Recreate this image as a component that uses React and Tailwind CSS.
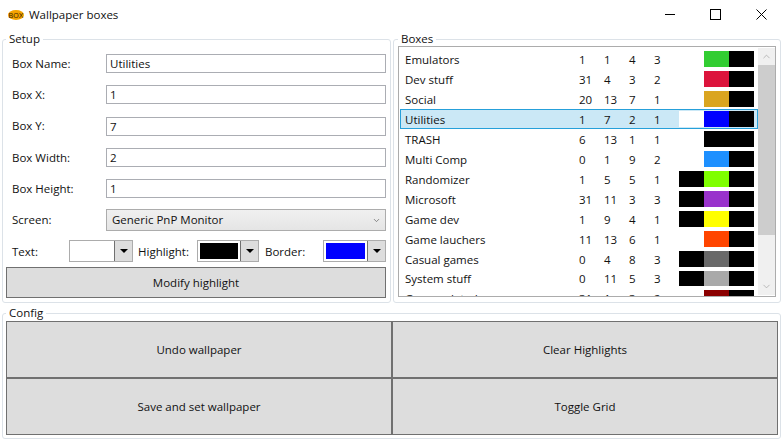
import { ChevronDown, ChevronUp } from "lucide-react";

const FONT = "font-['Open_Sans','Liberation_Sans',sans-serif]";

const BOXES = [
  { name: "Emulators", x: 1, y: 1, w: 4, h: 3, text: "bg-white", hl: "bg-[#32cd32]", border: "bg-black" },
  { name: "Dev stuff", x: 31, y: 4, w: 3, h: 2, text: "bg-white", hl: "bg-[#dc143c]", border: "bg-black" },
  { name: "Social", x: 20, y: 13, w: 7, h: 1, text: "bg-white", hl: "bg-[#daa520]", border: "bg-black" },
  { name: "Utilities", x: 1, y: 7, w: 2, h: 1, text: "bg-white", hl: "bg-[#0000ff]", border: "bg-black", selected: true },
  { name: "TRASH", x: 6, y: 13, w: 1, h: 1, text: "bg-white", hl: "bg-black", border: "bg-black" },
  { name: "Multi Comp", x: 0, y: 1, w: 9, h: 2, text: "bg-white", hl: "bg-[#1e90ff]", border: "bg-black" },
  { name: "Randomizer", x: 1, y: 5, w: 5, h: 1, text: "bg-black", hl: "bg-[#7fff00]", border: "bg-black" },
  { name: "Microsoft", x: 31, y: 11, w: 3, h: 3, text: "bg-black", hl: "bg-[#9932cc]", border: "bg-black" },
  { name: "Game dev", x: 1, y: 9, w: 4, h: 1, text: "bg-black", hl: "bg-[#ffff00]", border: "bg-black" },
  { name: "Game lauchers", x: 11, y: 13, w: 6, h: 1, text: "bg-white", hl: "bg-[#ff4500]", border: "bg-black" },
  { name: "Casual games", x: 0, y: 4, w: 8, h: 3, text: "bg-black", hl: "bg-[#696969]", border: "bg-black" },
  { name: "System stuff", x: 0, y: 11, w: 5, h: 3, text: "bg-black", hl: "bg-[#a9a9a9]", border: "bg-black", tight: true },
  { name: "Game related", x: 31, y: 1, w: 3, h: 2, text: "bg-white", hl: "bg-[#8b0000]", border: "bg-black" },
];

const FIELDS = [
  ["Box Name:", "Utilities"],
  ["Box X:", "1"],
  ["Box Y:", "7"],
  ["Box Width:", "2"],
  ["Box Height:", "1"],
];

function Group({ title, className, children }) {
  return (
    <fieldset className={`border border-[#dce2e8] rounded-[3px] min-w-0 ${className}`}>
      <legend className="px-[3px] h-[14px] leading-[14px]">{title}</legend>
      {children}
    </fieldset>
  );
}

function ColorPick({ swatch, className }) {
  return (
    <div className={`flex h-[22px] border border-[#acacac] bg-white ${className}`}>
      <div className="flex-1 p-[2px]">
        <div className={`w-full h-full ${swatch}`} />
      </div>
      <div className="w-[18px] bg-[#dddddd] border-l border-[#707070] flex items-center justify-center">
        <div className="w-0 h-0 border-x-[4px] border-x-transparent border-t-[4px] border-t-black" />
      </div>
    </div>
  );
}

function BigButton({ label, className }) {
  return (
    <button className={`bg-[#dddddd] border border-[#707070] flex items-center justify-center ${className}`}>
      {label}
    </button>
  );
}

export default function App() {
  return (
    <div className={`w-[783px] h-[441px] bg-white overflow-hidden text-[11.5px] text-[#111] flex flex-col ${FONT}`}>
      <div className="h-[30px] flex items-center shrink-0">
        <svg width="16" height="12" viewBox="0 0 16 12" className="ml-[8px] mr-[5px]">
          <ellipse cx="8" cy="6" rx="8" ry="5" fill="#f5a300" />
          <text x="8" y="8.5" textAnchor="middle" fontSize="7" fill="#3a2500" fontFamily="Liberation Sans">BOX</text>
        </svg>
        <span>Wallpaper boxes</span>
        <div className="ml-auto flex h-full items-center">
          <svg width="46" height="30" viewBox="0 0 46 30"><path d="M19 14.5h10" stroke="#000" fill="none" /></svg>
          <svg width="46" height="30" viewBox="0 0 46 30"><rect x="18.5" y="9.5" width="10" height="10" stroke="#000" fill="none" /></svg>
          <svg width="46" height="30" viewBox="0 0 46 30" className="mr-[-1px]"><path d="M18.5 9.5l10 10M28.5 9.5l-10 10" stroke="#000" fill="none" /></svg>
        </div>
      </div>

      <div className="flex gap-[2px] mx-[2px] mt-[2px] h-[271px] shrink-0">
        <Group title="Setup" className="w-[389px] px-[3px] pb-[4px]">
          <div className="flex flex-col gap-[12.25px] mt-[8px]">
            {FIELDS.map(([label, value]) => (
              <div key={label} className="flex items-center h-[19px]">
                <span className="w-[100px] pl-[6px] shrink-0">{label}</span>
                <div className="w-[280px] h-[19px] border border-[#abadb3] px-[3px] leading-[17px]">{value}</div>
              </div>
            ))}
          </div>
          <div className="flex items-center mt-[11px] h-[22px]">
            <span className="w-[100px] pl-[6px] shrink-0">Screen:</span>
            <div className="w-[280px] h-[22px] border border-[#acacac] bg-gradient-to-b from-[#f0f0f0] to-[#e5e5e5] flex items-center pl-[5px] pr-[4px]">
              <span>Generic PnP Monitor</span>
              <ChevronDown size={9} strokeWidth={2} className="ml-auto text-[#666]" />
            </div>
          </div>
          <div className="flex items-center mt-[9px] h-[22px] pl-[6px]">
            <span className="w-[57px] pt-[1px] shrink-0">Text:</span>
            <ColorPick swatch="bg-white" className="w-[64px]" />
            <span className="w-[64px] pl-[5px] pt-[1px] shrink-0">Highlight:</span>
            <ColorPick swatch="bg-black" className="w-[62px]" />
            <span className="w-[64px] pl-[6px] pt-[1px] shrink-0">Border:</span>
            <ColorPick swatch="bg-[#0000ff]" className="w-[63px]" />
          </div>
          <BigButton label="Modify highlight" className="w-[380px] h-[31px] mt-[5px]" />
        </Group>

        <Group title="Boxes" className="flex-1 px-[4px] pb-[4px]">
          <div className="border border-[#acacac] h-[251px] flex overflow-hidden">
            <div className="w-[360px] pl-[1px] pt-[2px] overflow-hidden">
              {BOXES.map((box) => {
                const cell = box.tight ? "h-[15px]" : "h-[16px]";
                return (
                  <div
                    key={box.name}
                    className={`relative flex items-center border ${box.tight ? "h-[19px]" : "h-[20px]"} ${box.selected ? "border-[#26a0da] bg-[#cbe8f6]" : "border-transparent"}`}
                  >
                    <span className="w-[178px] pl-[4px] pt-[1px] shrink-0">{box.name}</span>
                    <span className="w-[25px] pt-[1px] shrink-0">{box.x}</span>
                    <span className="w-[25px] pt-[1px] shrink-0">{box.y}</span>
                    <span className="w-[25px] pt-[1px] shrink-0">{box.w}</span>
                    <span className="w-[25px] pt-[1px] shrink-0">{box.h}</span>
                    <div className={`w-[25px] shrink-0 ${cell} ${box.text}`} />
                    <div className={`w-[25px] shrink-0 ${cell} ${box.hl}`} />
                    <div className={`w-[25px] shrink-0 ${cell} ${box.border}`} />
                  </div>
                );
              })}
            </div>
            <div className="w-[17px] h-[247px] mt-[1px] bg-[#f0f0f0] flex flex-col shrink-0">
              <div className="h-[17px] flex items-center justify-center shrink-0">
                <ChevronUp size={11} strokeWidth={1.5} className="text-[#a0a0a0]" />
              </div>
              <div className="h-[170px] bg-[#cdcdcd]" />
              <div className="h-[17px] mt-auto flex items-center justify-center shrink-0">
                <ChevronDown size={11} strokeWidth={1.5} className="text-[#a0a0a0]" />
              </div>
            </div>
          </div>
        </Group>
      </div>

      <Group title="Config" className="mx-[2px] mt-[3px] h-[133px] px-[3px] shrink-0">
        <div className="grid grid-cols-2 grid-rows-2 h-[114px] w-[772px] mt-[1px]">
          <BigButton label="Undo wallpaper" />
          <BigButton label="Clear Highlights" />
          <BigButton label="Save and set wallpaper" />
          <BigButton label="Toggle Grid" />
        </div>
      </Group>
    </div>
  );
}
